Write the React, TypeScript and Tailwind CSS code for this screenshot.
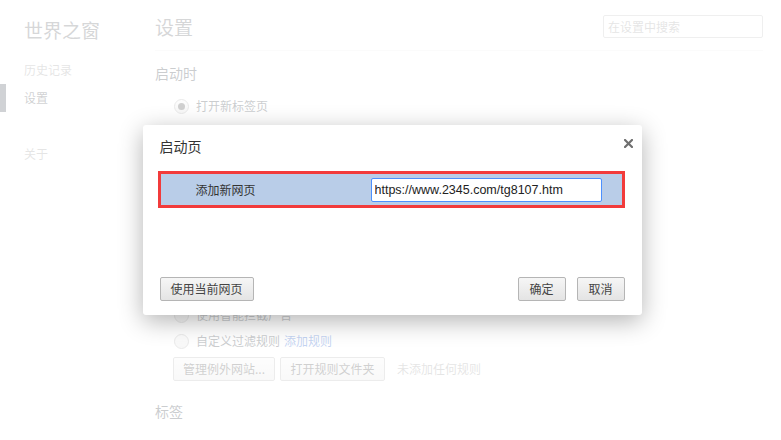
import React, { useState } from 'react';

const font = "font-['Noto_Sans_CJK_SC','Noto_Sans',sans-serif]";

const Radio: React.FC<{ checked?: boolean; label: string; children?: React.ReactNode }> = ({ checked, label, children }) => (
  <div className="flex items-center h-[26px] pl-[19px]">
    <span className="w-[15px] h-[15px] rounded-full border border-[#a8a8a8] bg-gradient-to-b from-[#f5f5f5] to-[#e2e2e2] flex items-center justify-center">
      {checked && <span className="w-[7px] h-[7px] rounded-full bg-[#444]" />}
    </span>
    <span className="ml-[7px] text-[12px] text-[#303942]">{label}</span>
    {children}
  </div>
);

const GrayButton: React.FC<{ label: string; className?: string }> = ({ label, className }) => (
  <button
    className={`h-[24px] px-[9px] whitespace-nowrap rounded-[2px] border border-[#b5b5b5] bg-gradient-to-b from-[#f6f6f6] to-[#e4e4e4] text-[12px] text-[#444] leading-none ${className ?? ''}`}
  >
    {label}
  </button>
);

const SettingsPage: React.FC = () => (
  <div className="flex h-full">
    <aside className="w-[155px] shrink-0 pt-[18px]">
      <h1 className="pl-[24px] text-[19px] leading-[24px] text-[#5c6166]">世界之窗</h1>
      <nav className="mt-[14px] flex flex-col text-[12px]">
        <div className="h-[28px] pl-[24px] flex items-center text-[#999]">历史记录</div>
        <div className="h-[28px] pl-[18px] flex items-center text-[#464a4f] border-l-[6px] border-[#464e5a]">设置</div>
        <div className="h-[28px]" />
        <div className="h-[28px] pl-[24px] flex items-center text-[#999]">关于</div>
      </nav>
    </aside>
    <main className="flex-1 pr-[18px]">
      <header className="h-[51px] flex items-center justify-between border-b border-[#eeeeee] pt-[10px] pb-[6px]">
        <h2 className="text-[19px] leading-[24px] text-[#5c6166]">设置</h2>
        <input
          className="w-[160px] h-[23px] -mt-[2px] border border-[#bfbfbf] rounded-[2px] px-[4px] text-[12px] outline-none placeholder:text-[#999]"
          placeholder="在设置中搜索"
        />
      </header>
      <section className="pt-[12px]">
        <h3 className="text-[14px] leading-[20px] text-[#303942]">启动时</h3>
        <div className="mt-[10px] flex flex-col">
          <Radio checked label="打开新标签页" />
          <Radio label="从上次停下的地方继续" />
          <Radio label="打开特定网页或一组网页">
            <span className="ml-[4px] text-[12px] text-[#1155cc]">设置网页</span>
          </Radio>
        </div>
      </section>
      <section className="pt-[77px]">
        <h3 className="text-[14px] leading-[20px] text-[#303942]">广告过滤</h3>
        <div className="mt-[8px] flex flex-col">
          <Radio label="不拦截广告" />
          <Radio label="使用智能拦截广告" />
          <Radio label="自定义过滤规则">
            <span className="ml-[4px] text-[12px] text-[#1155cc]">添加规则</span>
          </Radio>
        </div>
        <div className="mt-[3px] pl-[18px] flex items-center gap-[5px]">
          <GrayButton label="管理例外网站..." className="w-[102px]" />
          <GrayButton label="打开规则文件夹" className="w-[105px]" />
          <span className="ml-[7px] text-[12px] text-[#999]">未添加任何规则</span>
        </div>
      </section>
      <section className="pt-[20px]">
        <h3 className="text-[14px] leading-[20px] text-[#303942]">标签</h3>
      </section>
    </main>
  </div>
);

const StartupDialog: React.FC = () => {
  const [url, setUrl] = useState('https://www.2345.com/tg8107.htm');

  return (
    <div className="w-[499px] h-[190px] ml-[3px] bg-white rounded-[3px] shadow-[0_6px_24px_rgba(0,0,0,0.3)] flex flex-col px-[17px] pt-[11px] pb-[14px]">
      <div className="flex items-start justify-between">
        <h2 className="text-[14px] leading-[20px] text-[#333]">启动页</h2>
        <svg className="mt-[3px] -mr-[8px]" width="9" height="9" viewBox="0 0 9 9">
          <path d="M1 1L8 8M8 1L1 8" stroke="#6f6f6f" strokeWidth="2.2" strokeLinecap="square" />
        </svg>
      </div>
      <div className="mt-[15px] -ml-[2px] h-[37px] border-[3px] border-[#f23b3b] bg-[#b9cde8] flex items-center">
        <span className="w-[210px] pl-[35px] text-[12px] text-[#333]">添加新网页</span>
        <input
          value={url}
          onChange={(e) => setUrl(e.target.value)}
          className="w-[231px] h-[24px] px-[3px] bg-white border border-[#4d90fe] rounded-[2px] text-[12.5px] text-[#222] outline-none font-['Liberation_Sans',sans-serif]"
        />
      </div>
      <div className="mt-auto flex items-center">
        <GrayButton label="使用当前网页" className="w-[94px]" />
        <div className="ml-auto flex gap-[11px]">
          <GrayButton label="确定" className="w-[48px] border-[#707070]" />
          <GrayButton label="取消" className="w-[48px]" />
        </div>
      </div>
    </div>
  );
};

const App: React.FC = () => (
  <div className={`relative w-full h-[440px] overflow-hidden bg-white ${font}`}>
    <SettingsPage />
    <div className="absolute inset-0 bg-white/75 flex items-center justify-center">
      <StartupDialog />
    </div>
  </div>
);

export default App;
